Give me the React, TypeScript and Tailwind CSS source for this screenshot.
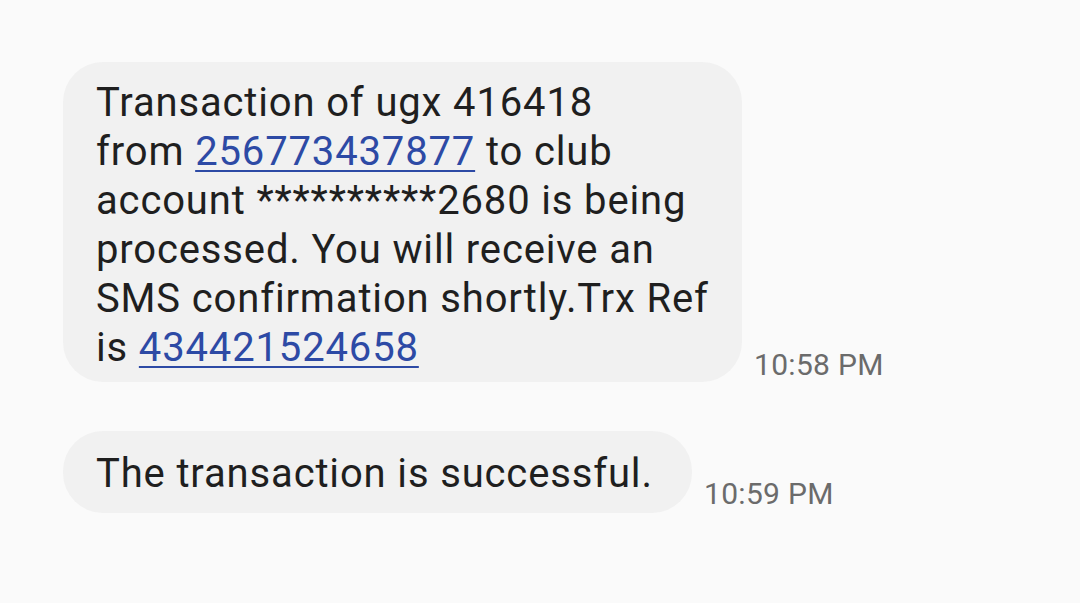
export default function App() {
  return (
    <div
      className="w-[1080px] h-[603px] overflow-hidden bg-[#fafafa] pl-[63px] pt-[62px]"
      style={{ fontFamily: "Roboto, 'Noto Sans', sans-serif" }}
    >
      <div className="flex flex-col gap-[49px]">
        {/* first message */}
        <div className="flex items-end gap-3">
          <div className="w-[679px] rounded-[40px] bg-[#f1f1f1] pl-[33px] pr-4 pt-[16px] pb-[10px] text-[40px] leading-[49px] tracking-[0.85px] text-[#1f1f1f]">
            Transaction of ugx 416418
            <br />
            from{" "}
            <a href="#" className="text-[#2d4aa5] underline underline-offset-[5px] decoration-[2px]">
              256773437877
            </a>{" "}
            to club
            <br />
            account **********2680 is being
            <br />
            processed. You will receive an
            <br />
            SMS confirmation shortly.Trx Ref
            <br />
            is{" "}
            <a href="#" className="text-[#2d4aa5] underline underline-offset-[5px] decoration-[2px]">
              434421524658
            </a>
          </div>
          <span className="text-[30px] leading-[35px] tracking-[0.3px] text-[#6b6b6b]">10:58 PM</span>
        </div>

        {/* second message */}
        <div className="flex items-end gap-3">
          <div className="w-[629px] rounded-[40px] bg-[#f1f1f1] pl-[33px] pr-4 pt-[18px] pb-[15px] text-[40px] leading-[49px] tracking-[0.85px] text-[#1f1f1f]">
            The transaction is successful.
          </div>
          <span className="mb-[2px] text-[30px] leading-[35px] tracking-[0.3px] text-[#6b6b6b]">10:59 PM</span>
        </div>
      </div>
    </div>
  );
}
